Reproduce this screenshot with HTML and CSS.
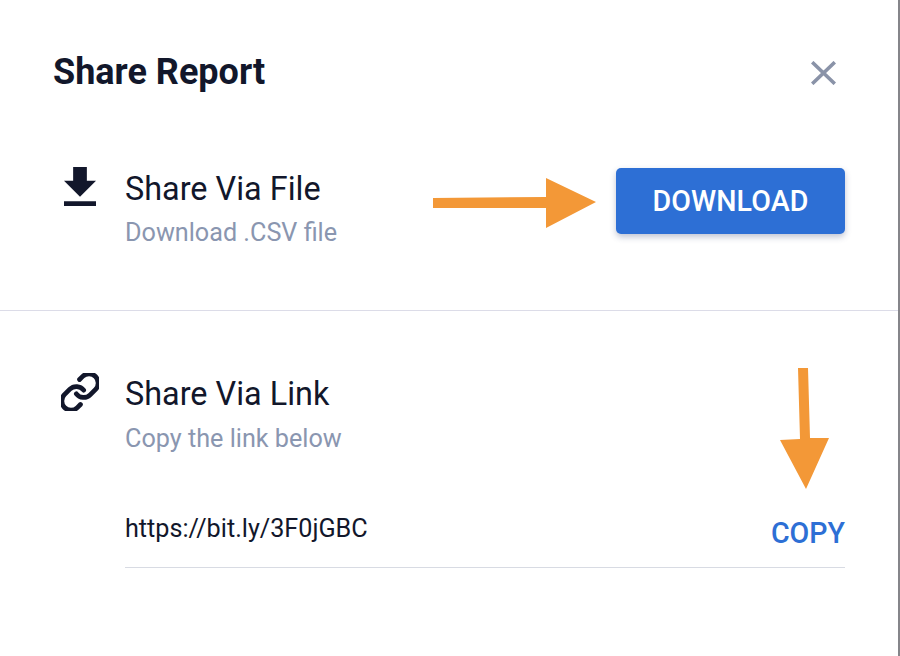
FILE: index.html
```html
<!DOCTYPE html>
<html lang="en">
<head>
  <meta charset="UTF-8" />
  <meta name="viewport" content="width=device-width, initial-scale=1.0" />
  <title>Share Report</title>
  <link rel="stylesheet" href="styles.css">
</head>
<body>
  <div class="modal">
    <header class="modal-head">
      <h1>Share Report</h1>
      <button class="close" aria-label="Close">
        <svg viewBox="0 0 25 24" width="25" height="24"><path d="M1.2 1.2 23.8 22.8M23.8 1.2 1.2 22.8" /></svg>
      </button>
    </header>

    <section class="share share-file">
      <svg class="icon icon-download" viewBox="5 3 14 17" width="32" height="39"><path d="M19 9h-4V3H9v6H5l7 7 7-7zM5 18v2h14v-2H5z" /></svg>
      <div class="share-text">
        <h2>Share Via File</h2>
        <p>Download .CSV file</p>
      </div>
      <button class="download">DOWNLOAD</button>
    </section>

    <section class="share share-link">
      <svg class="icon icon-link" viewBox="1.6 1.6 20.8 20.8" width="38" height="38"><path d="M10 13a5 5 0 0 0 7.54.54l3-3a5 5 0 0 0-7.07-7.07l-1.72 1.71" /><path d="M14 11a5 5 0 0 0-7.54-.54l-3 3a5 5 0 0 0 7.07 7.07l1.71-1.71" /></svg>
      <div class="share-text">
        <h2>Share Via Link</h2>
        <p>Copy the link below</p>
        <div class="link-row">
          <span class="url">https://bit.ly/3F0jGBC</span>
          <button class="copy">COPY</button>
        </div>
      </div>
    </section>
  </div>

  <!-- annotation arrows drawn over the screenshot -->
  <svg class="arrows" viewBox="0 0 900 656" width="900" height="656">
    <path d="M433 198 546 197V178L596 202 546 228V208L433 208z" />
    <path d="M798 368H808L810 438 829 438 806 489 780 440 800 439z" />
  </svg>
</body>
</html>
```

FILE: styles.css
```css
html, body {
  margin: 0;
  height: 100%;
}
body {
  font-family: Roboto, 'Liberation Sans', sans-serif;
  background: #fff;
  color: #12172b;
  overflow: hidden;
}
button {
  font-family: inherit;
  border: none;
  background: none;
  padding: 0;
}
.modal {
  box-sizing: border-box;
  width: 900px;
  height: 656px;
  border-right: 2px solid #85858a;
}
.modal-head {
  display: flex;
  justify-content: space-between;
  align-items: center;
  box-sizing: border-box;
  height: 96px;
  padding: 49px 62px 0 53px;
}
h1 {
  margin: -2px 0 0;
  font-size: 36px;
  line-height: 46px;
  font-weight: 700;
}
.close {
  display: flex;
}
.close path {
  stroke: #8a93a8;
  stroke-width: 3.6;
  fill: none;
}
.share {
  display: flex;
  align-items: flex-start;
}
.share-file {
  box-sizing: border-box;
  height: 215px;
  padding: 71px 53px 0 64px;
  border-bottom: 1px solid #dcdce8;
}
.share-text {
  flex: 1;
}
h2 {
  margin: 1px 0 0;
  font-size: 32.4px;
  line-height: 40px;
  font-weight: 400;
}
.share p {
  margin: 8px 0 0;
  font-size: 25.2px;
  line-height: 34px;
  color: #8a96b0;
}
.share-file h2 {
  margin-top: 2px;
}
.share-file p {
  margin-top: 7px;
}
.icon {
  flex: none;
}
.icon-download {
  margin-right: 29px;
}
.icon-download path {
  fill: #12172b;
}
.icon-link {
  margin-right: 26px;
}
.icon-link path {
  fill: none;
  stroke: #12172b;
  stroke-width: 2.6;
  stroke-linecap: round;
  stroke-linejoin: round;
}
.download {
  width: 229px;
  height: 66px;
  margin-top: 1px;
  background: #2d6fd5;
  color: #fff;
  font-size: 28.6px;
  font-weight: 500;
  letter-spacing: 0.1px;
  border-radius: 5px;
  box-shadow: 0 3px 6px rgba(45, 60, 110, 0.3);
}
.share-link {
  padding: 62px 53px 0 61px;
}
.link-row {
  display: flex;
  justify-content: space-between;
  align-items: flex-end;
  box-sizing: border-box;
  height: 86px;
  margin-top: 26px;
  padding-bottom: 17px;
  border-bottom: 1px solid #d8dbe3;
}
.url {
  font-size: 25.2px;
  line-height: 34px;
  margin-bottom: 4px;
}
.copy {
  color: #2d6fd5;
  font-size: 28.6px;
  font-weight: 500;
  line-height: 34px;
}
.arrows {
  position: absolute;
  left: 0;
  top: 0;
  pointer-events: none;
}
.arrows path {
  fill: #f39837;
}
```
